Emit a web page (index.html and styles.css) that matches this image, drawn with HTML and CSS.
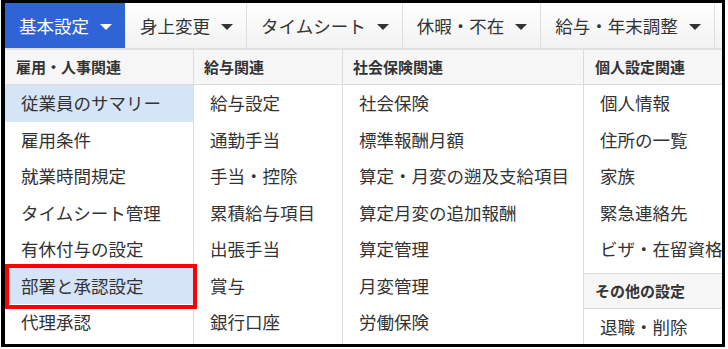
FILE: index.html
```html
<!DOCTYPE html>
<html>
<head>
 <meta charset="utf-8">
 <title>基本設定</title>
 <link rel="stylesheet" href="styles.css">
</head>
<body>
  <div class="frame">
    <nav class="menubar">
      <div class="menu active">基本設定<i class="caret"></i></div>
      <div class="menu">身上変更<i class="caret"></i></div>
      <div class="menu">タイムシート<i class="caret"></i></div>
      <div class="menu">休暇・不在<i class="caret"></i></div>
      <div class="menu">給与・年末調整<i class="caret"></i></div>
    </nav>

    <div class="panel">
      <div class="col">
        <div class="head">雇用・人事関連</div>
        <a class="item hover">従業員のサマリー</a>
        <a class="item">雇用条件</a>
        <a class="item">就業時間規定</a>
        <a class="item">タイムシート管理</a>
        <a class="item">有休付与の設定</a>
        <a class="item hover marked">部署と承認設定</a>
        <a class="item">代理承認</a>
      </div>
      <div class="col">
        <div class="head">給与関連</div>
        <a class="item">給与設定</a>
        <a class="item">通勤手当</a>
        <a class="item">手当・控除</a>
        <a class="item">累積給与項目</a>
        <a class="item">出張手当</a>
        <a class="item">賞与</a>
        <a class="item">銀行口座</a>
      </div>
      <div class="col">
        <div class="head">社会保険関連</div>
        <a class="item">社会保険</a>
        <a class="item">標準報酬月額</a>
        <a class="item">算定・月変の遡及支給項目</a>
        <a class="item">算定月変の追加報酬</a>
        <a class="item">算定管理</a>
        <a class="item">月変管理</a>
        <a class="item">労働保険</a>
      </div>
      <div class="col last">
        <div class="head">個人設定関連</div>
        <a class="item">個人情報</a>
        <a class="item">住所の一覧</a>
        <a class="item">家族</a>
        <a class="item">緊急連絡先</a>
        <a class="item">ビザ・在留資格</a>
        <div class="head sub">その他の設定</div>
        <a class="item">退職・削除</a>
      </div>
    </div>
  </div>
</body>
</html>
```

FILE: styles.css
```css
body {
  margin: 0;
  background: #fff;
  font-family: "Noto Sans CJK JP", "Noto Sans", sans-serif;
  color: #333;
}
.frame {
  margin-left: 1px;
  width: 717px;
  height: 341px;
  border-style: solid;
  border-color: #000;
  border-width: 3px 3px 3px 4px;
  overflow: hidden;
  background: #fff;
}

/* top menu */
.menubar {
  display: flex;
  height: 45px;
  background: linear-gradient(#fff, #f2f2f2);
  border-bottom: 2px solid #e2e2e2;
}
.menu {
  display: flex;
  align-items: center;
  padding: 0 13px 0 14px;
  font-size: 17.5px;
  line-height: 45px;
  border-right: 1px solid #dedede;
  color: #333;
  white-space: nowrap;
}
.menu:nth-child(2) {
  padding-left: 15px;
}
.menu.active {
  background: #2e64d6;
  color: #fff;
  border-right: none;
}
.caret {
  display: inline-block;
  margin-left: 11px;
  margin-top: 2px;
  border-top: 6px solid #333;
  border-left: 6px solid transparent;
  border-right: 6px solid transparent;
}
.menu.active .caret {
  border-top-color: #fff;
}

/* dropdown panel */
.panel {
  display: grid;
  grid-template-columns: 189px 149px 241px 1fr;
  height: 294px;
}
.col {
  display: flex;
  flex-direction: column;
  border-right: 1px solid #dcdcdc;
  white-space: nowrap;
}
.col.last {
  border-right: none;
}
.head {
  height: 34px;
  line-height: 34px;
  padding-left: 10px;
  font-size: 15px;
  font-weight: bold;
  background: #f6f6f6;
  border-bottom: 1px solid #dcdcdc;
  color: #333;
}
.col:first-child .head {
  padding-left: 11px;
}
.head.sub {
  margin-top: 5px;
  border-top: 1px solid #dcdcdc;
  padding-left: 11px;
}
.col.last .head {
  padding-left: 11px;
}
.item {
  display: block;
  position: relative;
  height: 36.5px;
  line-height: 36.5px;
  padding-left: 16px;
  font-size: 17.5px;
  color: #333;
}
.item.hover {
  background: #d6e4f8;
}
.item.marked::after {
  content: "";
  position: absolute;
  top: -4px;
  bottom: -5px;
  left: 0;
  right: -4px;
  border: 4px solid #f00;
  z-index: 2;
}
```
